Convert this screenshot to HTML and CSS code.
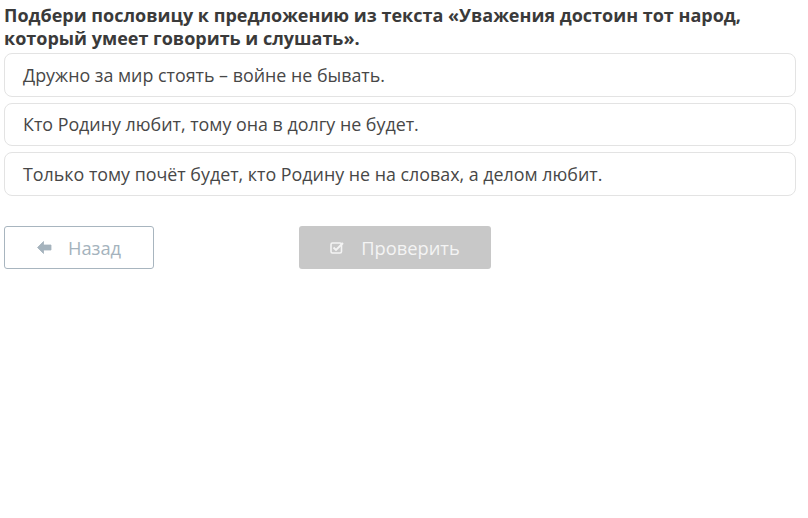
FILE: index.html
```html
<!DOCTYPE html>
<html lang="ru">
<head>
    <meta charset="UTF-8">
    <meta name="viewport" content="width=device-width, initial-scale=1.0">
    <title>Пословица</title>
    <link rel="stylesheet" href="styles.css">
</head>
<body>

    <div class="zadanie">
        <h1 class="vopros">Подбери пословицу к предложению из текста «Уважения достоин тот народ, который умеет говорить и слушать».</h1>

        <div class="varianty">
            <div class="variant">Дружно за мир стоять – войне не бывать.</div>
            <div class="variant">Кто Родину любит, тому она в долгу не будет.</div>
            <div class="variant">Только тому почёт будет, кто Родину не на словах, а делом любит.</div>
        </div>

        <div class="knopki">
            <button class="btn nazad">
                <svg width="15" height="13" viewBox="0 0 15 13"><path d="M6.5 0.5 L0.5 6.5 L6.5 12.5 L6.5 9 L14 9 L14 4 L6.5 4 Z" fill="currentColor" stroke="currentColor" stroke-width="0.8" stroke-linejoin="round"/></svg>
                Назад
            </button>
            <button class="btn proverit" disabled>
                <svg width="15" height="13" viewBox="0 0 15 13"><rect x="1" y="2" width="10.5" height="10" rx="1.5" fill="none" stroke="currentColor" stroke-width="1.6"/><path d="M3.5 6.5 L6 9 L13 2" fill="none" stroke="currentColor" stroke-width="1.9"/></svg>
                Проверить
            </button>
        </div>
    </div>

</body>
</html>
```

FILE: styles.css
```css
body {
    margin: 0;
    padding: 4px 12px 0 4px;
    font-family: 'Open Sans', sans-serif;
    background: #ffffff;
    color: #444444;
}
.vopros {
    font-size: 18px;
    font-weight: 700;
    line-height: 23px;
    color: #3a3a3a;
    margin: 0 0 3px 0;
}
.varianty {
    display: flex;
    flex-direction: column;
    gap: 6px;
}
.variant {
    border: 1px solid #e3e3e3;
    border-radius: 8px;
    padding: 0 18px;
    height: 41.5px;
    display: flex;
    align-items: center;
    font-size: 17.85px;
    color: #474747;
}
.knopki {
    display: flex;
    gap: 145px;
    margin-top: 30px;
}
.btn {
    font-family: 'Open Sans', sans-serif;
    font-size: 18.3px;
    height: 43px;
    border-radius: 3px;
    display: flex;
    align-items: center;
    justify-content: center;
    gap: 16px;
}
.nazad {
    width: 150px;
    background: #ffffff;
    border: 1px solid #a8b5bf;
    color: #a5b3bd;
}
.proverit {
    width: 192px;
    background: #c8c8c8;
    border: none;
    color: #f4f4f4;
}
```
